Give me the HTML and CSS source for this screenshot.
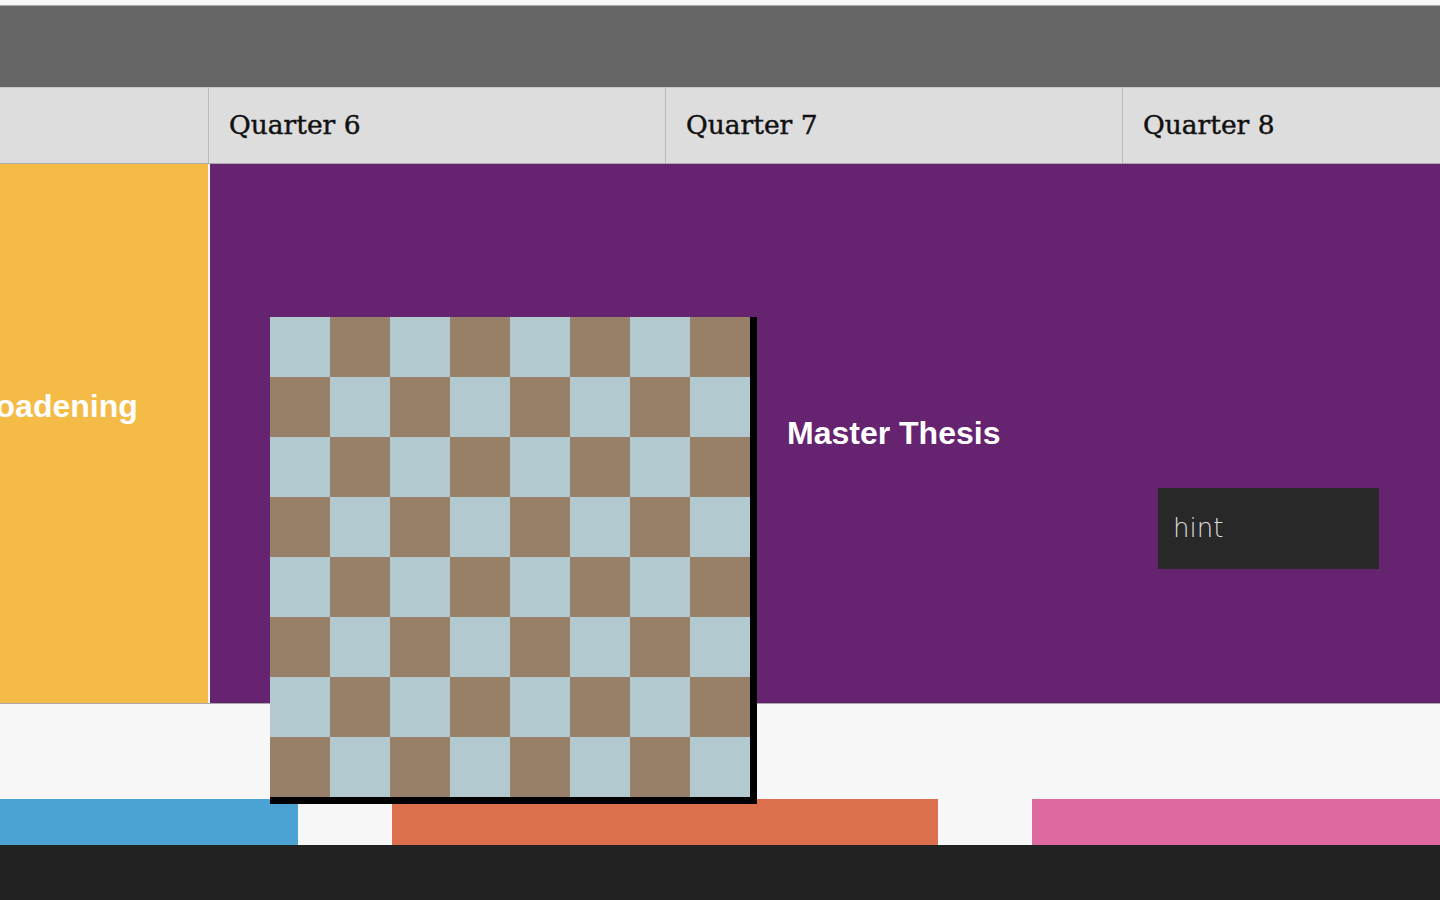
FILE: index.html
```html
<!DOCTYPE html>
<html lang="en">
<head>
<meta charset="utf-8">
<title>Timeline</title>
<link rel="stylesheet" href="styles.css">
</head>
<body>
<div class="page">
  <div class="topstrip"></div>
  <div class="toolbar"></div>
  <div class="header">
    <div class="hcell hcell-first"></div>
    <div class="hcell">Quarter 6</div>
    <div class="hcell">Quarter 7</div>
    <div class="hcell hcell-last">Quarter 8</div>
  </div>
  <div class="lanes">
    <div class="block block-yellow"><span class="block-label clipped">Broadening</span></div>
    <div class="block block-purple"><span class="block-label">Master Thesis</span></div>
  </div>
  <div class="bars">
    <div class="bar bar-blue"></div>
    <div class="bar bar-orange"></div>
    <div class="bar bar-pink"></div>
  </div>
  <div class="footer"></div>

  <div class="board"></div>
  <div class="hint">hint</div>
</div>
</body>
</html>
```

FILE: styles.css
```css
* { box-sizing: border-box; }

html, body {
  margin: 0;
  padding: 0;
  height: 100%;
  overflow: hidden;
  background: #f7f7f7;
}

.page {
  position: relative;
  width: 1440px;
  height: 900px;
  display: flex;
  flex-direction: column;
  font-family: "Liberation Sans", Arial, sans-serif;
}

.topstrip {
  height: 6px;
  background: #f7f7f7;
  border-bottom: 1px solid #aaaaaa;
}

.toolbar {
  height: 82px;
  background: #666666;
  border-bottom: 1px solid #c9c9c9;
}

.header {
  height: 76px;
  display: flex;
  background: #dddddd;
  border-bottom: 1px solid #aaaaaa;
}

.hcell {
  flex: 0 0 457px;
  display: flex;
  align-items: center;
  padding-left: 20px;
  padding-bottom: 2px;
  border-left: 1px solid #bbbbbb;
  font-family: "DejaVu Serif", "Liberation Serif", serif;
  font-size: 26.5px;
  color: #111111;
  -webkit-text-stroke: 0.45px #111111;
}

.hcell-first {
  flex: 0 0 208px;
  border-left: none;
}

.hcell-last {
  flex: 1 1 auto;
}

.lanes {
  height: 540px;
  display: flex;
  gap: 2px;
  border-bottom: 1px solid #aaaaaa;
}

.block {
  display: flex;
  overflow: hidden;
}

.block-yellow {
  flex: 0 0 208px;
  background: #f4bb47;
  align-items: flex-start;
  padding-top: 224px;
}

.block-purple {
  flex: 1 1 auto;
  background: #652370;
  align-items: center;
  padding-left: 577px;
}

.block-label {
  font-size: 32px;
  font-weight: bold;
  line-height: 37px;
  color: #ffffff;
  white-space: nowrap;
}

.clipped {
  margin-left: -40px;
}

.bars {
  margin-top: 95px;
  height: 46px;
  display: flex;
  gap: 94px;
}

.bar-blue { flex: 0 0 298px; background: #4aa3d2; }
.bar-orange { flex: 0 0 546px; background: #dd704c; }
.bar-pink { flex: 1 1 auto; background: #de68a0; }

.footer {
  flex: 1 1 auto;
  background: #222222;
}

.board {
  position: absolute;
  left: 270px;
  top: 317px;
  width: 487px;
  height: 487px;
  border-right: 7px solid #000000;
  border-bottom: 7px solid #000000;
  background: repeating-conic-gradient(#978067 0 25%, #b1c9cf 0 50%) 0 0 / 120px 120px;
}

.hint {
  position: absolute;
  left: 1158px;
  top: 488px;
  width: 221px;
  height: 81px;
  background: #282828;
  color: #dddddd;
  font-family: "DejaVu Sans", sans-serif;
  font-weight: 200;
  font-size: 26px;
  display: flex;
  align-items: center;
  padding-left: 15px;
  padding-bottom: 2px;
}
```
